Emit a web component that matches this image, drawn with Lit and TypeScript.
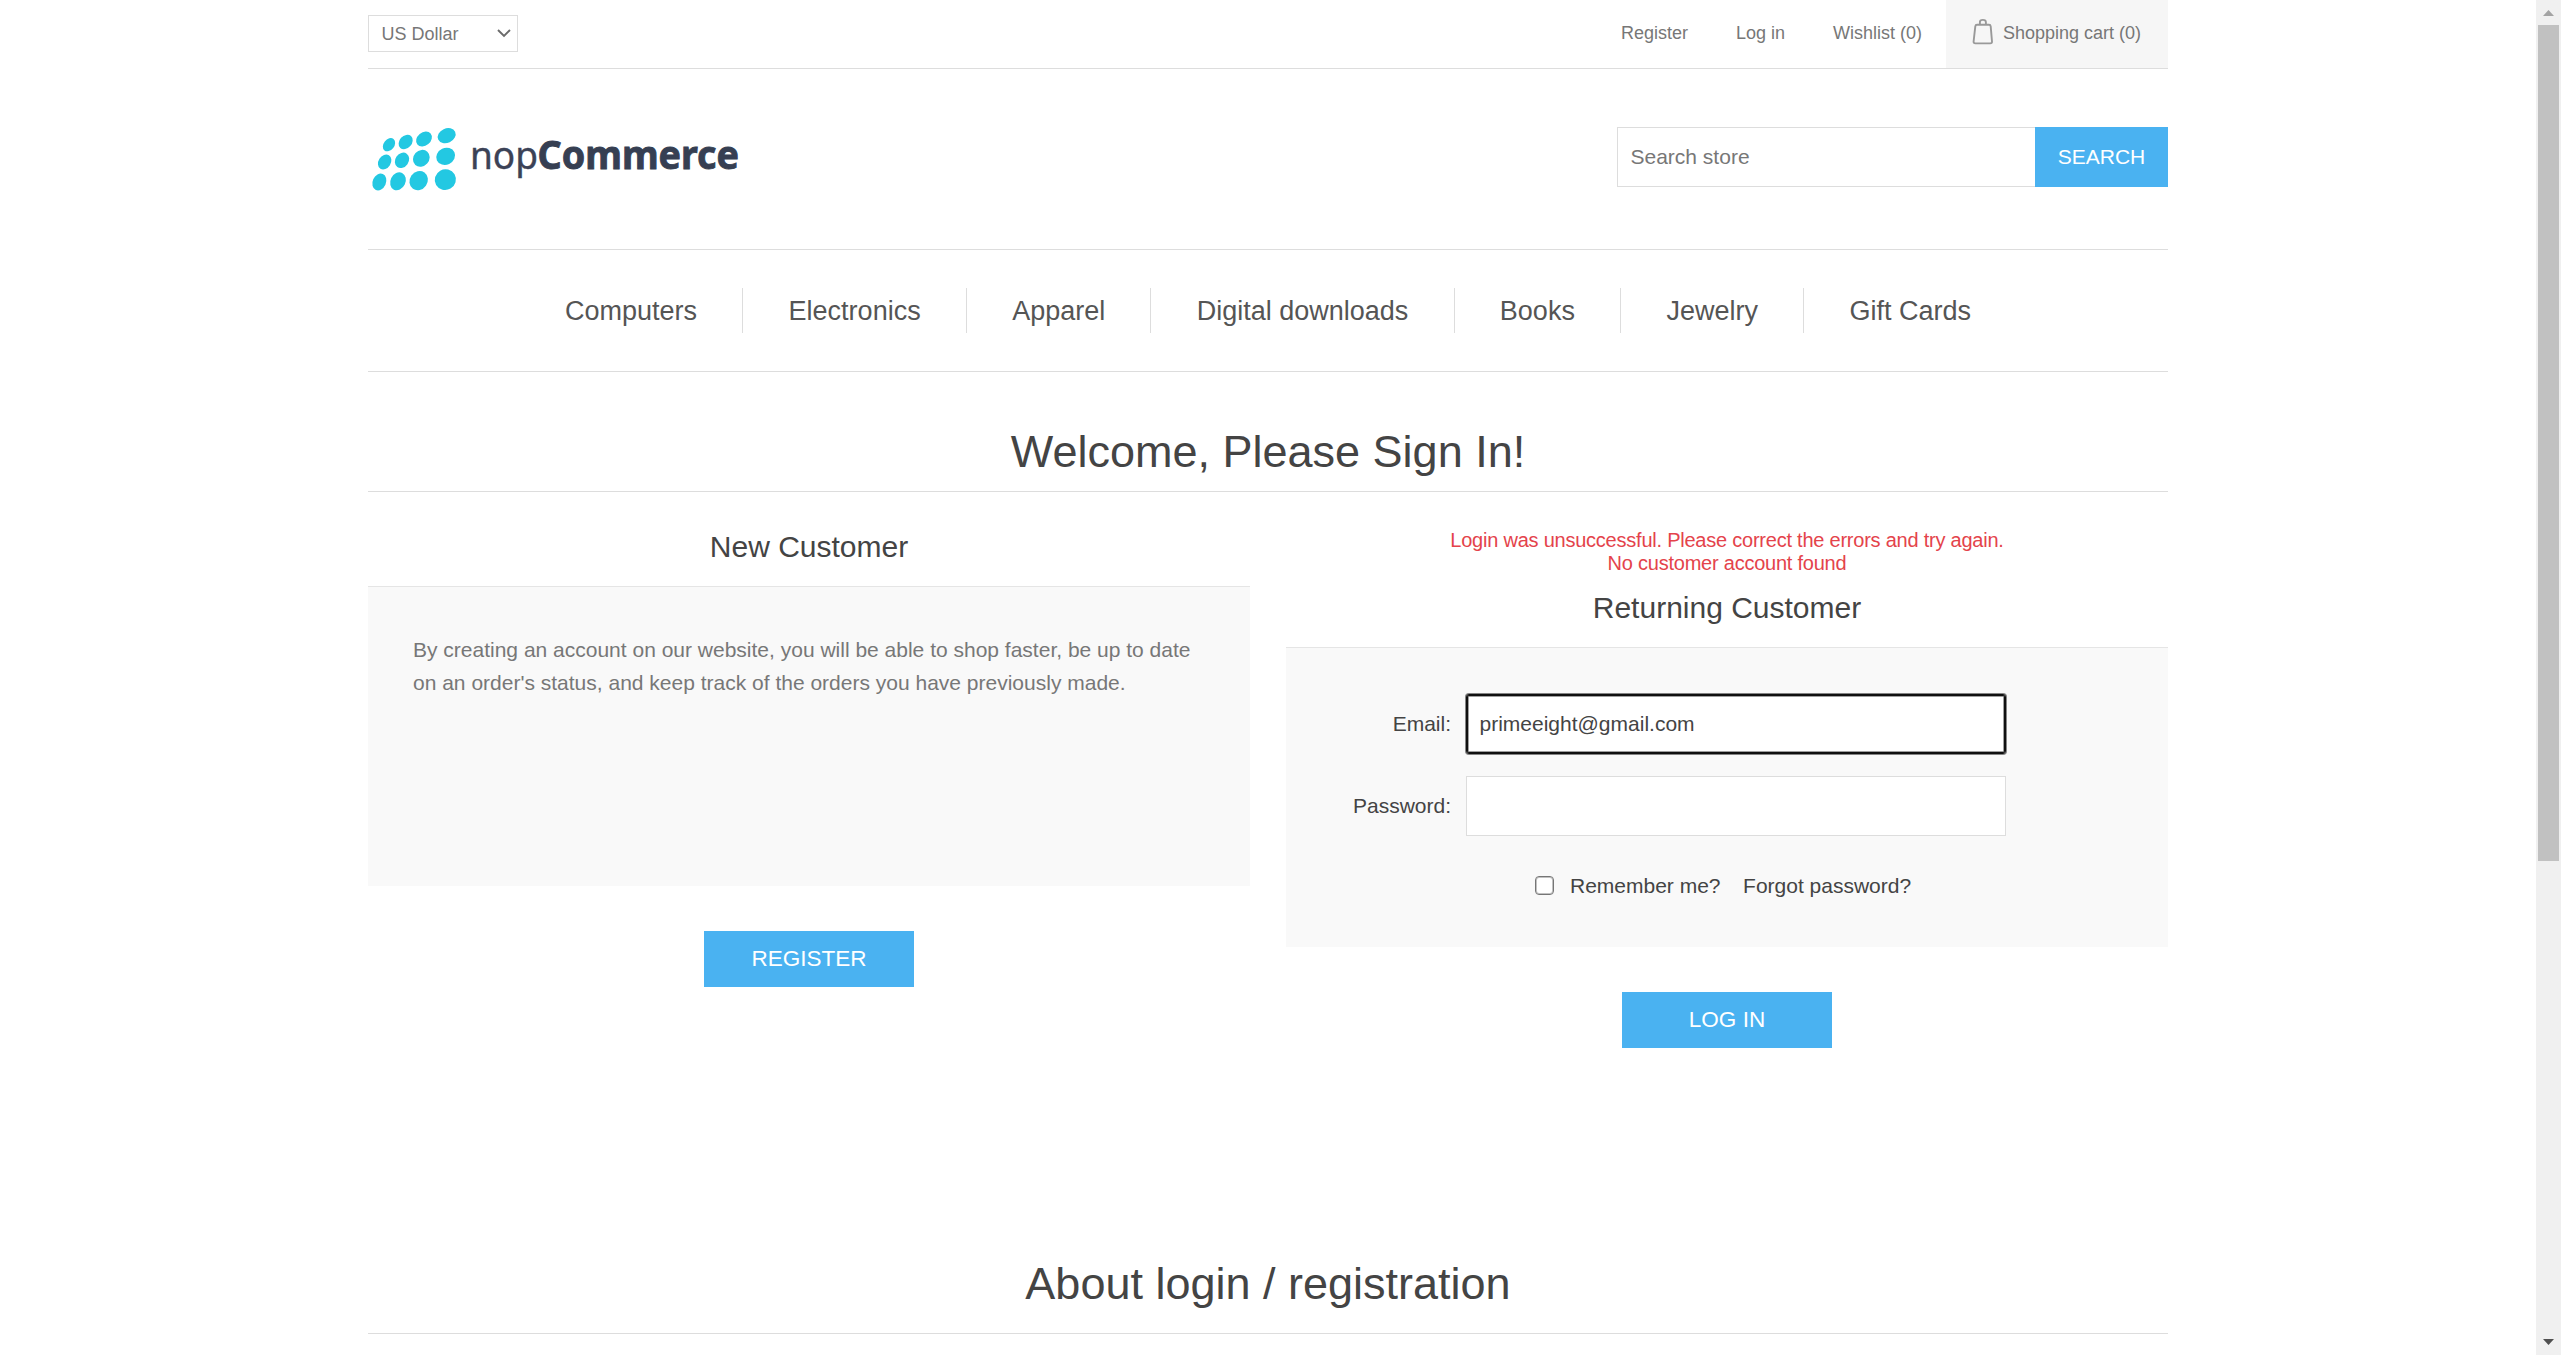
import { LitElement, html, css, svg } from "lit";
import { customElement } from "lit/decorators.js";

const LOGO_DOTS = [
  [117, 434, 16, 22, 38], [167, 426, 18.5, 24, 42], [222, 417, 20, 26, 50], [290, 407, 21.5, 28, 65],
  [104, 486, 18.5, 24, 32], [156, 481, 20, 24.5, 35], [214, 475, 23.5, 27, 42], [287, 469, 25, 29, 65],
  [88, 546, 20, 26, 24], [144, 544, 22.5, 28, 26], [206, 542, 26.5, 30, 35], [286, 539, 31, 32, 60],
];

@customElement("site-logo")
export class SiteLogo extends LitElement {
  static styles = css`
    :host { display: block; width: 375px; height: 90px; }
    .mark { display: block; overflow: visible; }
    .light { font: 400 39px "Noto Sans", "Open Sans", sans-serif; fill: #3b4256; stroke: #3b4256; stroke-width: 0.4px; }
    .bold { font: 700 39px "Noto Sans", "Open Sans", sans-serif; fill: #363f52; stroke: #363f52; stroke-width: 0.9px; }
  `;
  render() {
    return html`<svg class="mark" width="375" height="90" viewBox="18 113 375 90">
      <g transform="scale(0.33333)" fill="#23c8e2">
        ${LOGO_DOTS.map(([x, y, rx, ry, r]) => svg`<ellipse cx=${x} cy=${y} rx=${rx} ry=${ry} transform="rotate(${r} ${x} ${y})"></ellipse>`)}
      </g>
      <text class="light" x="120" y="169" textLength="68" lengthAdjust="spacingAndGlyphs">nop</text>
      <text class="bold" x="187.500" y="169" textLength="201.500" lengthAdjust="spacingAndGlyphs">Commerce</text>
    </svg>`;
  }
}

@customElement("page-scrollbar")
export class PageScrollbar extends LitElement {
  static styles = css`
    :host { display: flex; flex-direction: column; align-items: center; width: 25px; height: 1355px; background: #f0f0f0; flex: none; }
    .arrow { width: 25px; height: 25px; display: block; flex: none; }
    .thumb { width: 21px; height: 836px; background: #c1c1c1; margin-bottom: auto; }
  `;
  render() {
    return html`
      <svg class="arrow" viewBox="0 0 25 25"><path d="M7 16 L12.500 10 L18 16 Z" fill="#a3a3a3" /></svg>
      <div class="thumb"></div>
      <svg class="arrow" viewBox="0 0 25 25"><path d="M7 9 L18 9 L12.500 15 Z" fill="#505050" /></svg>
    `;
  }
}

@customElement("app-root")
export class AppRoot extends LitElement {
  static styles = css`
    :host {
      display: flex; width: 2561px; height: 1355px; overflow: hidden; background: #fff;
      font-family: "Liberation Sans", Arial, sans-serif; font-size: 21px; color: #444;
    }
    * { box-sizing: border-box; }
    h1, h2, p { margin: 0; font-weight: 400; }
    .page { flex: 1; display: flex; justify-content: center; }
    .wrap { width: 1800px; }
    .top { display: flex; justify-content: space-between; height: 69px; border-bottom: 1px solid #ddd; color: #777; font-size: 18px; }
    .currency {
      display: flex; align-items: center; justify-content: space-between; width: 150px; height: 37px; margin-top: 15px;
      border: 1px solid #ddd; padding: 0 6px 0 12.500px;
    }
    .currency-name { line-height: 21px; padding-top: 1px; }
    .links { display: flex; line-height: 66px; }
    .link { margin-right: 48px; }
    .link.last { margin-right: 24px; }
    .cart { display: flex; width: 222px; height: 68px; background: #f6f6f6; padding-left: 26px; }
    .bag { margin: 18px 10px 0 0; width: 21px; height: 27px; }
    .header { display: flex; justify-content: space-between; height: 181px; border-bottom: 1px solid #ddd; }
    .logo { margin-top: 44px; }
    .search { display: flex; width: 551px; height: 60px; margin-top: 58px; }
    input { font: 21px "Liberation Sans", Arial, sans-serif; color: #444; outline: none; background: #fff; border: 1px solid #ddd; border-radius: 0; margin: 0; }
    input::placeholder { color: #777; opacity: 1; }
    .query { width: 418px; height: 60px; border-right: 0; padding: 0 12.500px; }
    button { border: 0; padding: 0; background: #4ab2f1; color: #fff; font: 22.500px "Liberation Sans", Arial, sans-serif; display: block; }
    .go { width: 133px; height: 60px; font-size: 21px; }
    .nav { display: flex; justify-content: center; align-items: center; height: 122px; border-bottom: 1px solid #ddd; font-size: 27px; color: #555; padding-bottom: 1px; }
    .item { height: 45px; line-height: 47px; padding: 0 45.250px; border-left: 1px solid #ddd; }
    .item:first-child { border-left: 0; }
    .title { height: 120px; padding-top: 54px; border-bottom: 1px solid #ddd; font-size: 45px; line-height: 52px; text-align: center; }
    .cols { display: flex; justify-content: space-between; height: 741px; }
    .col { width: 882px; padding-top: 37px; }
    .errors { color: #e4434b; text-align: center; font-size: 20px; letter-spacing: -0.230px; line-height: 23px; height: 61px; }
    .sub { font-size: 30px; line-height: 36px; height: 57px; text-align: center; }
    .panel { height: 300px; background: #f9f9f9; border-top: 1px solid #e5e5e5; }
    .intro { padding: 46px 45px 0; line-height: 33px; color: #777; }
    .action { width: 210px; height: 56px; margin: 45px auto 0; padding-bottom: 1px; line-height: 55px; }
    .form { padding-top: 46px; }
    .field { display: flex; align-items: center; height: 60px; margin-bottom: 22px; }
    .label { width: 165px; margin-right: 15px; text-align: right; line-height: 60px; height: 60px; }
    .box { width: 540px; height: 60px; padding: 0 12.500px; }
    .box.active {
      border-color: #101010; border-radius: 3px;
      box-shadow: 0 0 0 1px rgba(16, 16, 16, 0.5), inset 0 0 0 1px #101010, inset 0 0 0 2px rgba(16, 16, 16, 0.4);
    }
    .options { display: flex; align-items: center; height: 24px; margin-top: 37px; padding-left: 249px; }
    .check {
      width: 19px; height: 19px; border: 1px solid #767676; border-radius: 4px; background: #fff; margin-right: 16px;
      box-shadow: inset 0 0 0 1px rgba(118, 118, 118, 0.45);
    }
    .choice { line-height: 24px; padding-top: 1px; }
    .remember { margin-right: 22.500px; }
    .about { height: 101px; padding-top: 25px; border-bottom: 1px solid #ddd; font-size: 45px; line-height: 52px; text-align: center; }
  `;

  render() {
    const items = ["Computers", "Electronics", "Apparel", "Digital downloads", "Books", "Jewelry", "Gift Cards"];
    return html`
      <div class="page"><main class="wrap">
        <div class="top">
          <div class="currency"><span class="currency-name">US Dollar</span>
            <svg width="14" height="9" viewBox="0 0 14 9"><path d="M1 1 L7 7 L13 1" fill="none" stroke="#6b6b6b" stroke-width="1.900" /></svg>
          </div>
          <div class="links">
            <span class="link">Register</span><span class="link">Log in</span><span class="link last">Wishlist (0)</span>
            <div class="cart">
              <svg class="bag" viewBox="0 0 21 27" fill="none" stroke="#999" stroke-width="1.900">
                <path d="M5 6.800 H17 Q18.500 6.800 18.700 8.300 L20 23.500 Q20.100 25.400 18.300 25.400 H3.300 Q1.500 25.400 1.600 23.500 L3.300 8.300 Q3.500 6.800 5 6.800 Z" />
                <path d="M7.900 6.800 V4.200 Q7.900 1.900 10.900 1.900 Q13.900 1.900 13.900 4.200 V6.800" />
              </svg><span>Shopping cart (0)</span>
            </div>
          </div>
        </div>
        <div class="header">
          <site-logo class="logo"></site-logo>
          <div class="search"><input class="query" placeholder="Search store" /><button class="go">SEARCH</button></div>
        </div>
        <nav class="nav">${items.map((t) => html`<span class="item">${t}</span>`)}</nav>
        <h1 class="title">Welcome, Please Sign In!</h1>
        <div class="cols">
          <section class="col">
            <h2 class="sub">New Customer</h2>
            <div class="panel"><p class="intro">By creating an account on our website, you will be able to shop faster, be up to date on an order's status, and keep track of the orders you have previously made.</p></div>
            <button class="action">REGISTER</button>
          </section>
          <section class="col">
            <div class="errors">Login was unsuccessful. Please correct the errors and try again.<br />No customer account found</div>
            <h2 class="sub">Returning Customer</h2>
            <div class="panel form">
              <div class="field"><span class="label">Email:</span><input class="box active" .value=${"primeeight@gmail.com"} /></div>
              <div class="field"><span class="label">Password:</span><input class="box" type="password" /></div>
              <div class="options"><span class="check"></span><span class="choice remember">Remember me?</span><span class="choice">Forgot password?</span></div>
            </div>
            <button class="action">LOG IN</button>
          </section>
        </div>
        <h1 class="about">About login / registration</h1>
      </main></div>
      <page-scrollbar></page-scrollbar>
    `;
  }
}
